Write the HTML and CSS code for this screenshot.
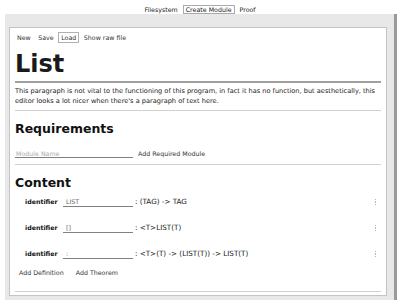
FILE: index.html
```html
<!DOCTYPE html>
<html>
<head>
<meta charset="utf-8">
<link rel="stylesheet" href="styles.css">
</head>
<body>
<nav class="tabs">
  <span class="tab">Filesystem</span>
  <span class="tab active">Create Module</span>
  <span class="tab">Proof</span>
</nav>
<div class="panel">
  <div class="card">
    <div class="toolbar">
      <button class="btn">New</button>
      <button class="btn">Save</button>
      <button class="btn focused">Load</button>
      <button class="btn">Show raw file</button>
    </div>
    <h1 class="title">List</h1>
    <hr class="rule thick">
    <p class="intro">This paragraph is not vital to the functioning of this program, in fact it has no function, but aesthetically, this editor looks a lot nicer when there's a paragraph of text here.</p>
    <hr class="rule">
    <h2 class="section">Requirements</h2>
    <div class="req-row">
      <input class="field module" placeholder="Module Name">
      <button class="btn">Add Required Module</button>
    </div>
    <hr class="rule">
    <h2 class="section">Content</h2>
    <div class="defs">
      <div class="def">
        <span class="kind">identifier</span>
        <input class="field ident" value="LIST">
        <span class="type">: (TAG) -&gt; TAG</span>
        <span class="kebab"><i></i><i></i><i></i></span>
      </div>
      <div class="def">
        <span class="kind">identifier</span>
        <input class="field ident" value="[]">
        <span class="type">: &lt;T&gt;LIST(T)</span>
        <span class="kebab"><i></i><i></i><i></i></span>
      </div>
      <div class="def">
        <span class="kind">identifier</span>
        <input class="field ident" value=":">
        <span class="type">: &lt;T&gt;(T) -&gt; (LIST(T)) -&gt; LIST(T)</span>
        <span class="kebab"><i></i><i></i><i></i></span>
      </div>
    </div>
    <div class="actions">
      <button class="btn">Add Definition</button>
      <button class="btn">Add Theorem</button>
    </div>
    <hr class="rule">
  </div>
</div>
</body>
</html>
```

FILE: styles.css
```css
html, body {
  margin: 0;
  padding: 0;
  background: #ffffff;
  height: 300px;
  overflow: hidden;
}
body {
  font-family: "DejaVu Sans", sans-serif;
  font-size: 6.3px;
  color: #222;
}
.tabs {
  display: flex;
  justify-content: center;
  align-items: center;
  gap: 2px;
  height: 10px;
  padding: 4px 0 0 0;
}
.tab {
  line-height: 7px;
  padding: 0 2px;
  border: 1px solid transparent;
}
.tab.active {
  border-color: #aaa;
  background: #fff;
}
.panel {
  box-sizing: border-box;
  margin-left: 5px;
  width: 392px;
  height: 286px;
  background: #e8e8e8;
  border-right: 3px solid #9a9a9a;
  padding: 13px 7px 0 4px;
}
.card {
  background: #fff;
  border: 1px solid #c4c4c4;
  padding: 4px 5px 3px 5px;
}
.btn {
  font: inherit;
  color: #333;
  background: transparent;
  border: 1px solid transparent;
  padding: 1px 2px;
  line-height: 7px;
  margin: 0;
}
.btn.focused {
  border-color: #b0b0b0;
}
.toolbar {
  display: flex;
  gap: 1.5px;
  margin-left: -1px;
}
.title {
  font-size: 24px;
  line-height: 28px;
  font-weight: bold;
  margin: 7px 0 3px 0;
  color: #1a1a1a;
}
.rule {
  border: 0;
  height: 1px;
  background: #d0d0d0;
  margin: 0;
}
.rule.thick {
  height: 2px;
  background: #a0a0a0;
}
.intro {
  font-size: 6.6px;
  margin: 4px 0 4px 0;
  line-height: 9.7px;
  color: #222;
}
.section {
  font-size: 12.5px;
  line-height: 15px;
  font-weight: bold;
  margin: 10px 0 0 0;
  color: #111;
}
.field {
  font: inherit;
  border: 0;
  border-bottom: 1px solid #808080;
  background: transparent;
  outline: none;
  height: 10px;
  line-height: 8px;
  padding: 1px 1px 0 1px;
  margin: 0;
  box-sizing: border-box;
  color: #666;
}
.field::placeholder {
  color: #aaa;
}
.req-row {
  display: flex;
  align-items: flex-end;
  margin: 12px 0 6px 0;
}
.field.module {
  width: 118px;
}
.req-row .btn {
  margin-left: 2px;
  margin-bottom: -1px;
}
.defs {
  display: flex;
  flex-direction: column;
  gap: 15px;
  margin-top: 6px;
}
.def {
  display: flex;
  align-items: center;
  height: 11px;
  padding-left: 10px;
}
.kind {
  font-weight: bold;
  color: #111;
  width: 38px;
}
.field.ident {
  width: 70px;
  padding-left: 3px;
}
.type {
  font-size: 7.2px;
  margin-left: 2px;
  color: #222;
  flex: 1;
}
.kebab {
  display: flex;
  flex-direction: column;
  gap: 1px;
  margin-right: 5px;
}
.kebab i {
  display: block;
  width: 1.5px;
  height: 1.5px;
  background: #b5b5b5;
}
.actions {
  display: flex;
  gap: 6px;
  margin: 8px 0 13px 0;
  margin-left: 1px;
}
```
